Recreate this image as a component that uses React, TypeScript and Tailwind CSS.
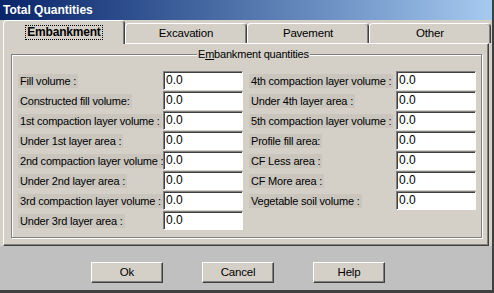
import React from 'react';

const left = [
  'Fill volume :',
  'Constructed fill volume:',
  '1st compaction layer volume :',
  'Under 1st layer area :',
  '2nd compaction layer volume :',
  'Under 2nd layer area :',
  '3rd compaction layer volume :',
  'Under 3rd layer area :',
];

const right = [
  '4th compaction layer volume :',
  'Under 4th layer area :',
  '5th compaction layer volume :',
  'Profile fill area:',
  'CF Less area :',
  'CF More area :',
  'Vegetable soil volume :',
];

function Row({ label, inputLeft }: { label: string; inputLeft: string }) {
  return (
    <div className="relative flex h-[20px] items-center">
      <span className="bg-[#cac6be] px-[2px] leading-[14px] whitespace-nowrap">{label}</span>
      <div
        className={`absolute top-0 ${inputLeft} h-[19px] w-[80px] border border-t-[#808080] border-l-[#808080] border-r-white border-b-white bg-white pl-[2px] text-[12px] leading-[16px] tracking-normal shadow-[inset_1px_1px_0_#404040]`}
      >
        0.0
      </div>
    </div>
  );
}

function Tab({ label, selected }: { label: string; selected?: boolean }) {
  if (selected) {
    return (
      <div className="relative z-10 -mb-px flex h-[24px] w-[122px] items-center justify-center rounded-t-[4px] border-t border-l border-r border-t-white border-l-white border-r-[#404040] bg-[#d4d0c8] shadow-[inset_-1px_0_0_#808080]">
        <span className="border border-dotted border-black px-[1px] text-[12px] leading-[13px] font-bold">
          {label}
        </span>
      </div>
    );
  }
  return (
    <div className="flex h-[20px] w-[122px] items-center justify-center rounded-t-[4px] border-t border-l border-r border-t-white border-l-white border-r-[#404040] bg-[#d4d0c8] shadow-[inset_-1px_0_0_#808080]">
      {label}
    </div>
  );
}

function Button({ label }: { label: string }) {
  return (
    <div className="flex h-[21px] w-[72px] items-center justify-center border border-t-white border-l-white border-r-[#404040] border-b-[#404040] bg-[#d4d0c8] shadow-[inset_-1px_-1px_0_#808080]">
      {label}
    </div>
  );
}

export default function App() {
  return (
    <div
      className="flex h-[293px] w-[494px] flex-col border-r-2 border-b-[3px] border-r-[#404040] border-b-[#404040] bg-[#d4d0c8] text-[11px] tracking-[-0.2px] text-black"
      style={{ fontFamily: '"Liberation Sans", Arial, sans-serif' }}
    >
      {/* title */}
      <div className="flex h-[20px] shrink-0 items-center bg-gradient-to-r from-[#0a246a] to-[#a6caf0] pl-[3px] text-[12px] font-bold tracking-normal text-white">
        Total Quantities
      </div>

      {/* tabs */}
      <div className="flex h-[23px] shrink-0 items-end pl-[3px] text-[11.5px]">
        <Tab label="Embankment" selected />
        <Tab label="Excavation" />
        <Tab label="Pavement" />
        <Tab label="Other" />
      </div>

      {/* page */}
      <div className="mx-[3px] flex h-[203px] shrink-0 border border-t-white border-l-white border-r-[#404040] border-b-[#404040] pt-[10px] pr-[6px] pb-[7px] pl-[7px] shadow-[inset_-1px_-1px_0_#808080]">
        <div className="relative flex flex-1 border border-[#808080] pt-[16px] pl-[6px] shadow-[inset_1px_1px_0_white,1px_1px_0_white]">
          <div className="absolute -top-[8px] left-[185px] bg-[#d4d0c8] px-[1px] leading-[14px]">
            E<span className="underline">m</span>bankment quantities
          </div>
          <div className="flex w-[231px] flex-col">
            {left.map((l) => (
              <Row key={l} label={l} inputLeft="left-[145px]" />
            ))}
          </div>
          <div className="flex flex-1 flex-col">
            {right.map((l) => (
              <Row key={l} label={l} inputLeft="left-[147px]" />
            ))}
          </div>
        </div>
      </div>

      {/* buttons */}
      <div className="flex flex-1 gap-[39px] bg-[#c0c0c0] pt-[16px] pl-[91px] text-[11.5px]">
        <Button label="Ok" />
        <Button label="Cancel" />
        <Button label="Help" />
      </div>
    </div>
  );
}
